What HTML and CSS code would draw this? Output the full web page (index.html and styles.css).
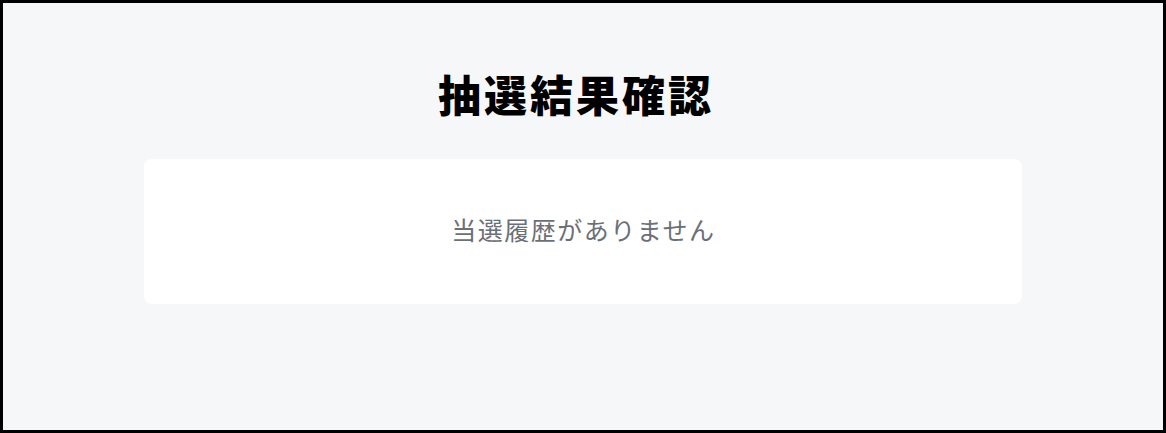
FILE: index.html
```html
<!DOCTYPE html>
<html lang="ja">
<head>
<meta charset="utf-8">
<title>抽選結果確認</title>
<link rel="stylesheet" href="styles.css">
</head>
<body>
<div class="page">
  <h1 class="title">抽選結果確認</h1>
  <div class="card">
    <p class="empty">当選履歴がありません</p>
  </div>
</div>
</body>
</html>
```
FILE: styles.css
```css
html, body {
  margin: 0;
  padding: 0;
}
body {
  font-family: "Noto Sans CJK JP", "Noto Sans", sans-serif;
}
.page {
  box-sizing: border-box;
  width: 1166px;
  height: 433px;
  border: 3px solid #000;
  background: #f6f7f9;
  padding-top: 58px;
  display: flex;
  flex-direction: column;
  align-items: center;
}
.title {
  margin: 0 14px 0 0;
  font-size: 43px;
  font-weight: 900;
  letter-spacing: 3px;
  line-height: 64px;
  color: #000;
}
.card {
  box-sizing: border-box;
  margin-top: 34px;
  width: 878px;
  height: 145px;
  padding-bottom: 6px;
  background: #fff;
  border-radius: 8px;
  display: flex;
  align-items: center;
  justify-content: center;
}
.empty {
  margin: 0 0 0 1px;
  font-size: 25px;
  letter-spacing: 1.5px;
  color: #6b7078;
}
```
